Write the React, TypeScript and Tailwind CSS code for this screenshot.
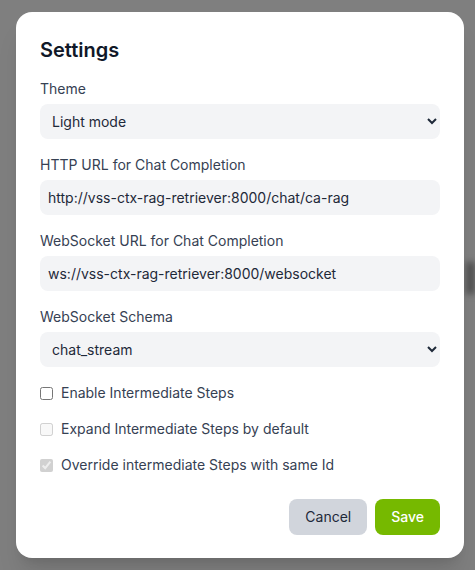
import { useState } from 'react';

export default function App() {
    const [theme, setTheme] = useState('light');
    const [schema, setSchema] = useState('chat_stream');

    return (
        <div className="relative h-[570px] w-[475px] overflow-hidden bg-[#7f7f7f] pl-4 pt-3 font-['Inter',sans-serif]">
            <div className="absolute right-0 top-[262px] h-[32px] w-[9px] bg-[#505050] blur-[3px]" />
            <div className="relative w-[448px] rounded-2xl bg-white px-6 pb-[23px] pt-6 shadow-xl">
                <h2 className="mb-[15px] text-xl font-semibold text-gray-900">Settings</h2>

                <div className="space-y-4">
                    <div>
                        <label className="mb-[5px] block text-sm text-gray-700">Theme</label>
                        <select
                            value={theme}
                            onChange={(e) => setTheme(e.target.value)}
                            className="block h-[35px] w-full rounded-lg bg-gray-100 px-2 text-sm text-gray-800 outline-none"
                        >
                            <option value="light">Light mode</option>
                            <option value="dark">Dark mode</option>
                        </select>
                    </div>

                    <div>
                        <label className="mb-[5px] block text-sm text-gray-700">HTTP URL for Chat Completion</label>
                        <input
                            type="text"
                            defaultValue="http://vss-ctx-rag-retriever:8000/chat/ca-rag"
                            className="block h-[35px] w-full rounded-lg bg-gray-100 px-2 text-sm text-gray-800 outline-none"
                        />
                    </div>

                    <div>
                        <label className="mb-[5px] block text-sm text-gray-700">WebSocket URL for Chat Completion</label>
                        <input
                            type="text"
                            defaultValue="ws://vss-ctx-rag-retriever:8000/websocket"
                            className="block h-[35px] w-full rounded-lg bg-gray-100 px-2 text-sm text-gray-800 outline-none"
                        />
                    </div>

                    <div>
                        <label className="mb-[5px] block text-sm text-gray-700">WebSocket Schema</label>
                        <select
                            value={schema}
                            onChange={(e) => setSchema(e.target.value)}
                            className="block h-[35px] w-full rounded-lg bg-gray-100 px-2 text-sm text-gray-800 outline-none"
                        >
                            <option value="chat_stream">chat_stream</option>
                            <option value="chat">chat</option>
                        </select>
                    </div>

                    <label className="!mt-[15px] flex h-5 items-center gap-2 text-sm text-gray-700">
                        <input type="checkbox" className="h-[13px] w-[13px]" />
                        Enable Intermediate Steps
                    </label>

                    <label className="flex h-5 items-center gap-2 text-sm text-gray-700">
                        <input type="checkbox" disabled className="h-[13px] w-[13px]" />
                        Expand Intermediate Steps by default
                    </label>

                    <label className="flex h-5 items-center gap-2 text-sm text-gray-700">
                        <input type="checkbox" disabled defaultChecked className="h-[13px] w-[13px]" />
                        Override intermediate Steps with same Id
                    </label>
                </div>

                <div className="mt-6 flex justify-end gap-2">
                    <button className="h-9 rounded-lg bg-gray-300 px-4 text-sm text-gray-800">Cancel</button>
                    <button className="h-9 rounded-lg bg-[#76b900] px-4 text-sm font-medium text-white">Save</button>
                </div>
            </div>
        </div>
    );
}
